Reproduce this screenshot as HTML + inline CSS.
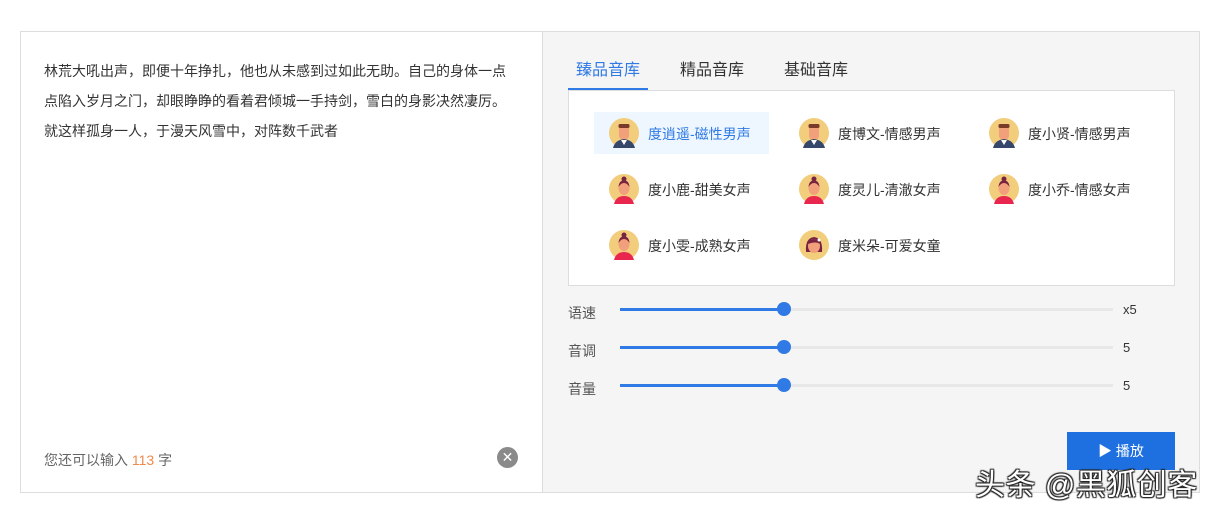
<!DOCTYPE html>
<html><head><meta charset="utf-8"><style>
*{margin:0;padding:0;box-sizing:border-box}
body{width:1213px;height:517px;background:#fff;position:relative;overflow:hidden;font-family:"Liberation Sans","Noto Sans CJK SC",sans-serif;color:#333}
.a{position:absolute}
.box{left:20px;top:31px;width:1180px;height:462px;border:1px solid #ddd;background:#f5f5f5}
.left{left:21px;top:32px;width:522px;height:460px;background:#fff;border-right:1px solid #ddd}
.txt{left:44px;top:56px;width:466px;font-size:14px;line-height:30px;color:#333}
.tab{font-size:16px;top:56px;color:#333}
.panel{left:568px;top:90px;width:607px;height:196px;background:#fff;border:1px solid #ddd}
.item{font-size:14px;color:#333;height:42px;line-height:42px}
.lab{font-size:14px;color:#555}
.tr{position:absolute;height:3px;background:#e8e8e8;left:620px;width:493px}
.fl{position:absolute;height:3px;background:#2f7ae5;left:620px;width:164px}
.th{position:absolute;width:14px;height:14px;border-radius:50%;background:#2f7ae5;left:777px}
.val{font-size:13px;color:#333;left:1123px}
</style></head><body>
<div class="a box"></div>
<div class="a left"></div>
<div class="a txt">林荒大吼出声，即便十年挣扎，他也从未感到过如此无助。自己的身体一点点陷入岁月之门，却眼睁睁的看着君倾城一手持剑，雪白的身影决然凄厉。就这样孤身一人，于漫天风雪中，对阵数千武者</div>
<div class="a" style="left:44px;top:450px;font-size:14px;color:#666">您还可以输入 <span style="color:#f08a4b">113</span> 字</div>
<div class="a" style="left:497px;top:447px;width:21px;height:21px;border-radius:50%;background:#8a8a8a;color:#fff;font-size:14px;line-height:21px;text-align:center">✕</div>

<div class="a tab" style="left:576px;color:#2f7ae5">臻品音库</div>
<div class="a" style="left:568px;top:88px;width:80px;height:2px;background:#2f7ae5"></div>
<div class="a tab" style="left:680px">精品音库</div>
<div class="a tab" style="left:784px">基础音库</div>
<div class="a panel"></div>
<div class="a" style="left:594px;top:112px;width:175px;height:42px;background:#eef6ff"></div>

<svg width="0" height="0" style="position:absolute"><defs>
<g id="m"><circle cx="15" cy="15" r="15" fill="#f1cd7c"/><rect x="10" y="8" width="10" height="13" rx="3" fill="#f2a07b"/><rect x="9.5" y="6" width="11" height="4" rx="1.5" fill="#7a3a2a"/><path d="M4 30 Q6 22 15 21 Q24 22 26 30Z" fill="#35476a"/><path d="M12 22 L15 27 L18 22Z" fill="#fff"/></g>
<g id="f"><circle cx="15" cy="15" r="15" fill="#f1cd7c"/><circle cx="15" cy="5" r="2.5" fill="#7a2340"/><ellipse cx="15" cy="14" rx="5.5" ry="7" fill="#f2a07b"/><path d="M9.5 13 Q10 6.5 15 6.5 Q20 6.5 20.5 13 Q18 9 15 9 Q12 9 9.5 13Z" fill="#7a2340"/><path d="M5 30 Q7 22 15 22 Q23 22 25 30Z" fill="#e8264e"/></g>
<g id="g"><circle cx="15" cy="15" r="15" fill="#f1cd7c"/><path d="M7 22 Q6 8 15 7 Q24 8 23 22Z" fill="#7a2340"/><ellipse cx="15" cy="16" rx="6" ry="7" fill="#f2a07b"/><path d="M9 14 Q10 9 15 9 Q20 9 21 14 Q17 11 9 14Z" fill="#7a2340"/><circle cx="20" cy="10" r="1.5" fill="#fff"/></g>
</defs></svg>
<svg class="a" style="left:609px;top:118px" width="30" height="30"><use href="#m"/></svg>
<svg class="a" style="left:799px;top:118px" width="30" height="30"><use href="#m"/></svg>
<svg class="a" style="left:989px;top:118px" width="30" height="30"><use href="#m"/></svg>
<svg class="a" style="left:609px;top:174px" width="30" height="30"><use href="#f"/></svg>
<svg class="a" style="left:799px;top:174px" width="30" height="30"><use href="#f"/></svg>
<svg class="a" style="left:989px;top:174px" width="30" height="30"><use href="#f"/></svg>
<svg class="a" style="left:609px;top:230px" width="30" height="30"><use href="#f"/></svg>
<svg class="a" style="left:799px;top:230px" width="30" height="30"><use href="#g"/></svg>
<div class="a item" style="left:648px;top:113px;color:#2f7ae5">度逍遥-磁性男声</div>
<div class="a item" style="left:838px;top:113px">度博文-情感男声</div>
<div class="a item" style="left:1028px;top:113px">度小贤-情感男声</div>
<div class="a item" style="left:648px;top:169px">度小鹿-甜美女声</div>
<div class="a item" style="left:838px;top:169px">度灵儿-清澈女声</div>
<div class="a item" style="left:1028px;top:169px">度小乔-情感女声</div>
<div class="a item" style="left:648px;top:225px">度小雯-成熟女声</div>
<div class="a item" style="left:838px;top:225px">度米朵-可爱女童</div>

<div class="a lab" style="left:568px;top:303px">语速</div>
<div class="tr" style="top:308px"></div><div class="fl" style="top:308px"></div><div class="th" style="top:302px"></div>
<div class="a val" style="top:302px">x5</div>
<div class="a lab" style="left:568px;top:341px">音调</div>
<div class="tr" style="top:346px"></div><div class="fl" style="top:346px"></div><div class="th" style="top:340px"></div>
<div class="a val" style="top:340px">5</div>
<div class="a lab" style="left:568px;top:379px">音量</div>
<div class="tr" style="top:384px"></div><div class="fl" style="top:384px"></div><div class="th" style="top:378px"></div>
<div class="a val" style="top:378px">5</div>

<div class="a" style="left:1067px;top:432px;width:108px;height:38px;background:#1e70e0;color:#fff;font-size:14px;line-height:38px;text-align:center">▶ 播放</div>
<div class="a" style="left:975px;top:468px;font-size:30px;line-height:36px;letter-spacing:0.5px;color:#fff;text-shadow:1px 1px 1px #222,-1px -1px 1px #222,1px -1px 1px #222,-1px 1px 1px #222">头条 @黑狐创客</div>
</body></html>
